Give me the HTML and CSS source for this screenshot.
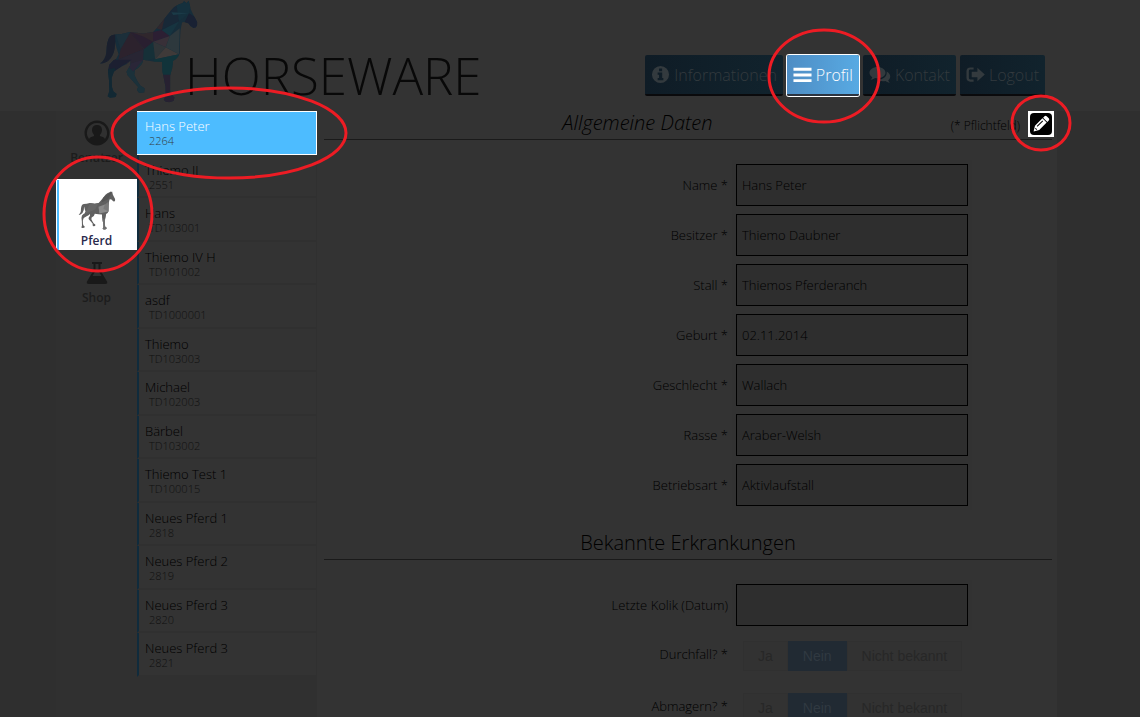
FILE: index.html
```html
<!DOCTYPE html>
<html lang="de">
<head>
<meta charset="utf-8">
<meta name="viewport" content="width=device-width, initial-scale=1">
<title>Horseware – Profil</title>
<link rel="stylesheet" href="styles.css">
</head>
<body>
<svg class="defs" aria-hidden="true">
  <defs>
    <path id="horse" d="M283 2L290 10L297 2L300 14L303 28Q309 42 318 58L323 68Q323 78 319 82L311 84L303 79L296 70L283 66L277 68Q271 90 271 115L270 160Q264 176 250 183Q249 205 241 228L241 272L243 284L254 293L252 303L240 308L228 306L222 300L228 288L227 260L222 235L218 215L217 186L190 185L160 180Q158 198 135 211L133 225L143 245L152 258L164 266L163 278L148 280L141 270L145 262L130 245L112 225L110 215L122 195L122 182Q112 194 95 200L72 215L65 235L66 262L70 275L80 283L77 292L60 294L53 290L58 275L57 240L54 215L58 195L70 182L78 178L86 163L80 145L75 124Q76 158 62 175Q48 191 30 191Q46 180 49 160Q50 122 60 110Q66 103 95 102L120 96L160 101L190 96L205 80L225 55L245 30Q258 15 278 10Z"/>
    <clipPath id="horse-clip"><use href="#horse"/></clipPath>
  </defs>
</svg>

<header class="header">
  <div class="wrap header-inner">
    <a class="brand" href="#">
      <svg class="brand-horse" viewBox="30 0 295 310" aria-hidden="true">
        <g clip-path="url(#horse-clip)">
          <rect x="20" width="310" height="310" fill="#122c3c"/>
          <path d="M20 95H75L78 180L20 200Z" fill="#161c2c"/>
          <path d="M75 95L122 96L92 150Z" fill="#182f3c"/>
          <path d="M122 96L162 148L85 180L92 148Z" fill="#2b202d"/>
          <path d="M122 96L200 96L190 126L162 148Z" fill="#30262c"/>
          <path d="M122 96L160 110L190 126L165 150Z" fill="#281c30"/>
          <path d="M85 180L162 148L160 182L120 195Z" fill="#272334"/>
          <path d="M162 148L190 126L196 175L160 184Z" fill="#123039"/>
          <path d="M190 96L216 90L240 108L190 126Z" fill="#2b1c34"/>
          <path d="M200 85L225 52L226 80L216 90Z" fill="#30252d"/>
          <path d="M190 126L240 108L228 142Z" fill="#393039"/>
          <path d="M190 126L228 142L196 178Z" fill="#30363a"/>
          <path d="M196 178L228 142L268 163Z" fill="#423c3b"/>
          <path d="M228 142L240 108L270 85L268 163Z" fill="#2c393f"/>
          <path d="M216 90L268 64L240 108Z" fill="#123543"/>
          <path d="M225 52L260 12L268 64L216 90Z" fill="#142738"/>
          <path d="M260 12L305 2L298 40L268 64Z" fill="#10303f"/>
          <path d="M245 37L298 40L250 45Z" fill="#173d4c"/>
          <path d="M298 40L330 60L320 90L285 66Z" fill="#151e33"/>
          <path d="M190 180L268 163L245 225H210Z" fill="#0c343c"/>
          <path d="M210 225H250L260 310H215Z" fill="#251f31"/>
          <path d="M50 180L125 180L65 220H50Z" fill="#181c31"/>
          <path d="M50 210L75 205L90 300H45Z" fill="#0d2733"/>
          <path d="M110 195L160 182L170 285H135L105 230Z" fill="#17313c"/>
          <path d="M110 195L160 180L130 215Z" fill="#29243a"/>
        </g>
      </svg>
      <span class="brand-name">HORSEWARE</span>
    </a>
    <nav class="nav">
      <button class="nav-btn" type="button">
        <svg class="ico" viewBox="0 0 20 20" aria-hidden="true"><path fill-rule="evenodd" d="M10 1a9 9 0 1 0 0 18a9 9 0 0 0 0-18ZM8.500 3.700h3.200v2.800H8.500ZM7 8h4.800v5.800H13V16H7v-2.200h1.500v-3.600H7Z"/></svg>
        Informationen
      </button>
      <button class="nav-btn nav-btn-active" type="button">
        <svg class="ico" viewBox="0 0 20 20" aria-hidden="true"><path d="M.5 3h19v3H.5zM.5 9h19v3H.5zM.5 15h19v3H.5z"/></svg>
        Profil
      </button>
      <button class="nav-btn" type="button">
        <svg class="ico ico-wide" viewBox="0 0 22 20" aria-hidden="true"><path d="M8.500 2C4 2 .5 4.500.5 7.800c0 1.800 1 3.400 2.800 4.500-.3 1-.8 1.700-1.500 2.400 1.800-.2 3.200-.8 4.300-1.700 6 1 10.400-1.700 10.400-5.200C16.500 4.500 13 2 8.500 2Z"/><path d="M17.700 6.500c3.900 2 4.800 6 1.500 8.700.3 1 .8 1.700 1.600 2.500-1.900-.2-3.300-.8-4.500-1.700-3 .6-5.800 0-7.600-1.400 5.500 0 9.600-3.400 9-8.100Z"/></svg>
        Kontakt
      </button>
      <button class="nav-btn" type="button">
        <svg class="ico" viewBox="0 0 20 20" aria-hidden="true"><path d="M8 2.500H4.500A4 4 0 0 0 .5 6.500v7a4 4 0 0 0 4 4H8v-2.300H4.500A1.500 1.500 0 0 1 3 13.700V6.300a1.500 1.500 0 0 1 1.500-1.500H8Z"/><path d="M12 3l7.800 7-7.800 7v-4H6V7h6Z"/></svg>
        Logout
      </button>
    </nav>
  </div>
</header>

<div class="wrap layout">
  <nav class="side">
    <a class="side-item" href="#">
      <svg class="side-user" viewBox="0 0 26 26" aria-hidden="true"><path fill-rule="evenodd" d="M13 .5a12.500 12.500 0 1 0 0 25a12.500 12.500 0 0 0 0-25ZM13 3a10 10 0 0 1 8 16c-.7-1.400-2.200-2-4.500-2.700-.8-.3-.8-1.300-.2-1.900C17.500 13 18 11.600 18 9.800 18 6.800 16 5 13 5S8 6.800 8 9.800c0 1.800.5 3.200 1.700 4.600.6.600.6 1.600-.2 1.900C7.200 17 5.700 17.600 5 19A10 10 0 0 1 13 3Z"/></svg>
      <span>Benutzer</span>
    </a>
    <a class="side-item side-item-active" href="#">
      <svg class="side-horse" viewBox="30 0 295 310" aria-hidden="true">
        <g clip-path="url(#horse-clip)">
          <rect x="20" width="310" height="310" fill="#606060"/>
          <path d="M122 96L190 96L162 148L85 180Z" fill="#686868"/>
          <path d="M190 126L240 108L268 163L196 178Z" fill="#8b8b8b"/>
          <path d="M228 142L240 108L270 85L268 163Z" fill="#7a7a7a"/>
          <path d="M225 52L300 0L268 64L216 90Z" fill="#555"/>
          <path d="M210 225H250L260 310H215Z" fill="#707070"/>
        </g>
      </svg>
      <span>Pferd</span>
    </a>
    <a class="side-item side-item-shop" href="#">
      <svg class="side-flask" viewBox="0 0 22 24" aria-hidden="true"><path fill-rule="evenodd" d="M6 1h10v2h-1.500v6.500L21 20.500Q22 23 19 23H3Q0 23 1 20.500L7.500 9.500V3H6ZM9.500 3v7L6.500 15h9l-3-5V3Z"/></svg>
      <span>Shop</span>
    </a>
  </nav>

  <ul class="list">
    <li><a class="horse horse-active" href="#"><b>Hans Peter</b><small>2264</small></a></li>
    <li><a class="horse" href="#"><b>Thiemo II</b><small>2551</small></a></li>
    <li><a class="horse" href="#"><b>Hans</b><small>TD103001</small></a></li>
    <li><a class="horse" href="#"><b>Thiemo IV H</b><small>TD101002</small></a></li>
    <li><a class="horse" href="#"><b>asdf</b><small>TD1000001</small></a></li>
    <li><a class="horse" href="#"><b>Thiemo</b><small>TD103003</small></a></li>
    <li><a class="horse" href="#"><b>Michael</b><small>TD102003</small></a></li>
    <li><a class="horse" href="#"><b>Bärbel</b><small>TD103002</small></a></li>
    <li><a class="horse" href="#"><b>Thiemo Test 1</b><small>TD100015</small></a></li>
    <li><a class="horse" href="#"><b>Neues Pferd 1</b><small>2818</small></a></li>
    <li><a class="horse" href="#"><b>Neues Pferd 2</b><small>2819</small></a></li>
    <li><a class="horse" href="#"><b>Neues Pferd 3</b><small>2820</small></a></li>
    <li><a class="horse" href="#"><b>Neues Pferd 3</b><small>2821</small></a></li>
  </ul>

  <main class="content">
    <div class="section-head">
      <h2 class="title title-italic">Allgemeine Daten</h2>
      <span class="hint">(* Pflichtfeld)</span>
      <button class="edit" type="button" aria-label="Bearbeiten">
        <svg viewBox="0 0 22 22" aria-hidden="true"><rect width="22" height="22" rx="4"/><g transform="rotate(45 11 11)" fill="#fff"><path d="M8 3Q8 1.500 9.500 1.500h3Q14 1.500 14 3V5H8ZM8 6h6V16.500L11 21.500 8 16.500Z"/><path d="M10 7.500v8M10 18h2" stroke="#000" fill="none"/></g></svg>
      </button>
    </div>
    <div class="fields">
      <label for="name">Name *</label><div class="cell"><input id="name" type="text" value="Hans Peter"></div>
      <label for="owner">Besitzer *</label><div class="cell"><input id="owner" type="text" value="Thiemo Daubner"></div>
      <label for="stable">Stall *</label><div class="cell"><input id="stable" type="text" value="Thiemos Pferderanch"></div>
      <label for="birth">Geburt *</label><div class="cell"><input id="birth" type="text" value="02.11.2014"></div>
      <label for="sex">Geschlecht *</label><div class="cell"><input id="sex" type="text" value="Wallach"></div>
      <label for="breed">Rasse *</label><div class="cell"><input id="breed" type="text" value="Araber-Welsh"></div>
      <label for="mode">Betriebsart *</label><div class="cell"><input id="mode" type="text" value="Aktivlaufstall"></div>
    </div>

    <div class="section-head">
      <h2 class="title">Bekannte Erkrankungen</h2>
    </div>
    <div class="fields">
      <label for="colic">Letzte Kolik (Datum)</label><div class="cell"><input id="colic" type="text"></div>
      <span class="choice-label" id="l1">Durchfall? *</span>
      <div class="choice" role="radiogroup" aria-labelledby="l1">
        <label><input type="radio" name="d"><span>Ja</span></label><label><input type="radio" name="d" checked><span>Nein</span></label><label><input type="radio" name="d"><span>Nicht bekannt</span></label>
      </div>
      <span class="choice-label" id="l2">Abmagern? *</span>
      <div class="choice" role="radiogroup" aria-labelledby="l2">
        <label><input type="radio" name="a"><span>Ja</span></label><label><input type="radio" name="a" checked><span>Nein</span></label><label><input type="radio" name="a"><span>Nicht bekannt</span></label>
      </div>
    </div>
  </main>
</div>

<svg class="marks" width="1140" height="717" viewBox="0 0 1140 717" aria-hidden="true">
  <ellipse cx="824" cy="76" rx="55" ry="46"/>
  <ellipse cx="229" cy="133" rx="117" ry="45"/>
  <ellipse cx="98" cy="214" rx="54" ry="57"/>
  <ellipse cx="1041" cy="123" rx="29" ry="27"/>
</svg>
</body>
</html>
```
FILE: styles.css
```css
* { box-sizing: border-box; }

html, body { height: 100%; }

body {
  margin: 0;
  display: flex;
  flex-direction: column;
  position: relative;
  overflow: hidden;
  background: #2f2f2f;
  color: #000;
  font: 300 13px/18px "Open Sans", sans-serif;
}

a { color: inherit; text-decoration: none; }
button, input { font: inherit; color: inherit; }

.defs { position: absolute; width: 0; height: 0; }

.wrap {
  width: 100%;
  max-width: 1084px;
  padding-right: 83px;
  margin-left: auto;
}

/* Header */
.header { flex: none; background: #333; }

.header-inner {
  display: flex;
  justify-content: space-between;
  height: 111px;
}

.brand { display: flex; padding-left: 44px; }
.brand-horse { width: 98px; height: 103px; flex: none; opacity: .85; }
.brand-name {
  margin-left: -13px;
  padding-top: 40px;
  font-size: 51px;
  line-height: 70px;
  color: #080808;
}

.nav {
  display: flex;
  align-items: flex-start;
  gap: 4px;
  padding: 55px 12px 0 0;
}

.nav-btn {
  display: flex;
  align-items: center;
  gap: 4px;
  height: 41px;
  padding: 0 6px;
  border: 0;
  border-bottom: 2px solid #0a0a0c;
  border-radius: 2px;
  background: linear-gradient(90deg, #0f1c26, #11232d);
  color: #333a3e;
  font-size: 16px;
  line-height: 24px;
  white-space: nowrap;
}

.nav-btn-active {
  border-color: #2c3440;
  background: linear-gradient(90deg, #4e8dc4, #58aae3);
  box-shadow: 0 0 0 1px #fff;
  color: #fff;
}

.ico { width: 19px; height: 19px; fill: currentColor; }
.ico-wide { width: 22px; height: 20px; }

/* Columns */
.layout {
  flex: 1;
  min-height: 0;
  display: grid;
  grid-template-columns: 81px 180px 1fr;
}

/* Sidebar */
.side {
  background: #303030;
  color: #1c1c1c;
  font-size: 12px;
  line-height: 16px;
  font-weight: 600;
}

.side-item {
  display: flex;
  flex-direction: column;
  align-items: center;
  height: 68px;
  padding-top: 9px;
}

.side-user { width: 26px; height: 26px; margin-bottom: 4px; fill: #191919; }
.side-item-active {
  height: 71px;
  padding-top: 11px;
  border: 1px solid #fff;
  border-bottom: 0;
  box-shadow: inset 2px 0 #4dbcff;
  background: #fff;
  color: #2a2a4c;
}
.side-horse { width: 38px; height: 39px; margin-bottom: 3px; }
.side-item-shop { padding-top: 11px; }
.side-flask { width: 22px; height: 24px; margin-bottom: 5px; fill: #191919; }

/* Horse list */
.list {
  display: grid;
  grid-auto-rows: 44px 43px;
  align-content: start;
  margin: 0;
  padding: 0;
  list-style: none;
  background: #303030;
}

.horse {
  display: flex;
  flex-direction: column;
  height: 100%;
  padding: 7px 6px 0;
  border-left: 2px solid #102b3c;
  border-right: 1px solid #303030;
  border-bottom: 2px solid #303030;
  background: #333;
}

.horse b { font-weight: 300; line-height: 16px; color: #000; }
.horse small {
  padding-left: 4px;
  font-size: 11px;
  line-height: 13px;
  font-weight: 300;
  color: #101010;
}

.horse-active {
  border: 1px solid #fff;
  border-left: 0;
  padding: 6px 8px 0;
  background: #4dbcff;
}
.horse-active b { color: #fff; }
.horse-active small { color: #333e46; }

/* Form */
.content {
  min-width: 0;
  padding: 0 5px 0 7px;
  background: #333;
}

.section-head {
  display: flex;
  align-items: flex-start;
  border-bottom: 1px solid #1a1a1a;
}
.fields + .section-head { padding-top: 21px; }

.title {
  flex: 1;
  margin: 0;
  padding-bottom: 4px;
  font-size: 20px;
  line-height: 24px;
  font-weight: 300;
  text-align: center;
}
.title-italic { font-style: italic; }

.hint { padding-top: 6px; font-size: 12px; }

.edit {
  width: 26px;
  height: 26px;
  margin: 0 -2px 0 8px;
  padding: 2px;
  border: 0;
  background: #fff;
}
.edit svg { display: block; width: 22px; height: 22px; }

.fields {
  display: grid;
  grid-template-columns: 1fr 240px;
  align-items: center;
  padding: 20px 80px 0 0;
}
.fields > label, .choice-label { padding-right: 4px; text-align: right; }

.cell { padding: 4px; background: #323232; }
.cell input {
  display: block;
  width: 100%;
  height: 42px;
  padding: 0 5px;
  border: 1px solid #000;
  border-radius: 0;
  background: #2e2e2e;
  outline: 0;
}

.choice-label { padding-bottom: 4px; }

.choice {
  display: flex;
  height: 52px;
  padding: 11px;
  font: 14px/28px "Liberation Sans", Arial, sans-serif;
  color: #272727;
}
.choice label { position: relative; }
.choice input {
  position: absolute;
  inset: 0;
  margin: 0;
  opacity: 0;
}
.choice span {
  display: block;
  padding: 0 14px;
  border: 1px solid #303030;
  white-space: nowrap;
  background: #323232;
}
.choice input:checked + span { background: #212a33; border-color: #212a33; color: #303941; }

/* Highlight rings */
.marks {
  position: absolute;
  top: 0;
  left: 0;
  pointer-events: none;
}
.marks ellipse { fill: none; stroke: #ed1c24; stroke-width: 3; }
```
